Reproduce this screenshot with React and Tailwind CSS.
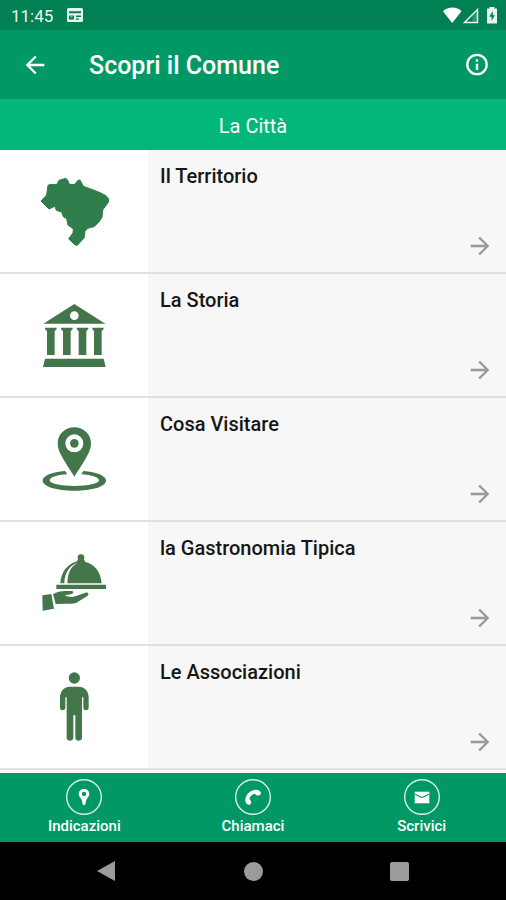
import { MdArrowBack, MdArrowForward } from 'react-icons/md';

function BrazilIcon() {
  return (
    <svg viewBox="42 33 240 240" className="h-20 w-20 text-[#2f7d4b]" fill="currentColor" aria-hidden="true">
      <path
        d="M84 76 L92 73 L110 74 L117 61 L137 55 L143 60 L148 73 L163 74 L174 61 L180 60 L190 79 L218 89 L238 97 L258 107 L266 117 L265 127 L248 150 L246 172 L236 187 L222 200 L203 205 L195 214 L192 234 L172 256 L164 254 L146 236 L159 219 L160 207 L144 195 L140 176 L130 170 L125 156 L109 151 L105 139 L87 147 L63 123 L80 105 Z"
        stroke="currentColor"
        strokeWidth="3"
        strokeLinejoin="round"
      />
    </svg>
  );
}

function MuseumIcon() {
  return (
    <svg viewBox="42 15 240 240" className="h-20 w-20 text-[#44764c]" fill="currentColor" aria-hidden="true">
      <path fillRule="evenodd" d="M163 42 L256 101 H70 Z M163 64 a13 13 0 1 0 0 26 a13 13 0 1 0 0 -26 Z" />
      <path d="M75 113 H110 V117 L104 124 V195 H81 V124 L75 117 Z" />
      <path d="M123 113 H158 V117 L152 124 V195 H129 V124 L123 117 Z" />
      <path d="M170 113 H205 V117 L199 124 V195 H176 V124 L170 117 Z" />
      <path d="M217 113 H251 V117 L245 124 V195 H222 V124 L217 117 Z" />
      <path d="M75 206 H251 L257 231 H69 Z" />
    </svg>
  );
}

function PlaceIcon() {
  return (
    <svg viewBox="42 12 240 240" className="h-20 w-20 text-[#44764c]" fill="currentColor" aria-hidden="true">
      <path
        fillRule="evenodd"
        d="M163 37 C135 37 113 58 113 86 C113 102 121 117 131 134 C142 153 154 169 163 185 C172 169 184 153 195 134 C205 117 213 102 213 86 C213 58 191 37 163 37 Z M163 58 a27 27 0 1 1 0 54 a27 27 0 1 1 0 -54 Z"
      />
      <circle cx="163" cy="85" r="13" />
      <path d="M135 168 C96 171 68 182 68 197 C68 214 110 227 163 227 C216 227 258 214 258 197 C258 182 230 171 190 168 L184 178 C217 180 237 187 237 196 C237 206 204 213 163 213 C122 213 89 206 89 196 C89 187 109 180 142 178 Z" />
    </svg>
  );
}

function FoodIcon() {
  return (
    <svg viewBox="42 24 240 240" className="h-20 w-20 text-[#44764c]" fill="currentColor" aria-hidden="true">
      <circle cx="183" cy="68" r="10" />
      <path d="M173 74 H193 L195 80 C224 87 243 111 245 145 H142 C143 113 152 94 174 83 C151 89 134 110 133 145 H121 C123 111 142 87 171 79 Z" />
      <path d="M109 149 H258 V162 H109 Z" />
      <path d="M67 181 L94 177 L102 221 L68 227 Z" />
      <path d="M99 178 C111 170 122 168 135 168 H156 C161 169 161 175 156 177 L134 181 C143 186 157 187 166 184 L196 173 C205 171 208 177 203 182 L168 204 C160 207 150 206 140 206 L107 207 Z" />
    </svg>
  );
}

function PersonIcon() {
  return (
    <svg viewBox="42 36 240 240" className="h-20 w-20 text-[#44764c]" fill="currentColor" aria-hidden="true">
      <circle cx="163" cy="69" r="17" />
      <path d="M149 95 H177 C196 96 205 109 206 126 V158 C206 168 190 168 190 158 V127 H186 V249 C186 260 166 260 166 249 V181 H160 V249 C160 260 140 260 140 249 V127 H136 V158 C136 168 120 168 120 158 V126 C121 109 130 96 149 95 Z" />
    </svg>
  );
}

const sections = [
  { label: 'Il Territorio', icon: BrazilIcon },
  { label: 'La Storia', icon: MuseumIcon },
  { label: 'Cosa Visitare', icon: PlaceIcon },
  { label: 'la Gastronomia Tipica', icon: FoodIcon },
  { label: 'Le Associazioni', icon: PersonIcon },
];

function PinGlyph() {
  return (
    <svg viewBox="0 0 36 36" className="h-9 w-9" fill="none" aria-hidden="true">
      <circle cx="18" cy="18" r="17.3" stroke="#d6f0e4" strokeWidth="1.4" />
      <path
        fill="#fff"
        fillRule="evenodd"
        d="M18 10 C14.9 10 12.7 12 12.7 15 C12.7 17 14 18.3 15.2 20 C16.2 21.6 16.3 23.5 16.5 25 Q18 27.5 19.5 25 C19.7 23.5 19.8 21.6 20.8 20 C22 18.3 23.3 17 23.3 15 C23.3 12 21.1 10 18 10 Z M18 12.7 a2.2 2.2 0 1 1 0 4.4 a2.2 2.2 0 1 1 0 -4.4 Z"
      />
    </svg>
  );
}

function PhoneGlyph() {
  return (
    <svg viewBox="0 0 36 36" className="h-9 w-9" fill="none" aria-hidden="true">
      <circle cx="18" cy="18" r="17.3" stroke="#d6f0e4" strokeWidth="1.4" />
      <path
        fill="#fff"
        d="M10.3 21.5 C10.5 15.5 15.5 10.7 21.5 10.8 C23.5 10.9 25.6 12.3 26 14.2 C26.2 15.5 24 17 22.5 16.6 C21.2 16.3 20.8 15 19.6 14.9 C17.3 14.9 14.4 17.8 14.5 20 C14.6 21.1 16.1 21.6 16.3 22.9 C16.5 24.4 15 26 13.7 25.8 C11.7 25.4 10.4 23.5 10.3 21.5 Z"
      />
    </svg>
  );
}

function MailGlyph() {
  return (
    <svg viewBox="0 0 36 36" className="h-9 w-9" fill="none" aria-hidden="true">
      <circle cx="18" cy="18" r="17.3" stroke="#d6f0e4" strokeWidth="1.4" />
      <path fill="#fff" d="M10.7 12.7 H25.3 V24.3 H10.7 Z" />
      <path stroke="#009966" strokeWidth="1.1" d="M11 15.2 C14 16 15 18.2 18 18.2 C21 18.2 22 16 25 15.2" />
    </svg>
  );
}

const actions = [
  { label: 'Indicazioni', icon: PinGlyph },
  { label: 'Chiamaci', icon: PhoneGlyph },
  { label: 'Scrivici', icon: MailGlyph },
];

function StatusBar() {
  return (
    <div className="flex h-[30px] items-center justify-between bg-[#008053] pl-[11px] pr-2 text-[#e8f5ef]">
      <div className="flex items-center gap-[14px]">
        <span className="text-[17px] leading-6 pt-[2px]">11:45</span>
        <svg viewBox="0 0 16 14" className="h-[14px] w-4" fill="currentColor" aria-hidden="true">
          <path
            fillRule="evenodd"
            d="M1.5 0 H14.5 Q16 0 16 1.5 V12.5 Q16 14 14.5 14 H1.5 Q0 14 0 12.5 V1.5 Q0 0 1.5 0 Z M2 3.3 V5.3 H14 V3.3 Z M2 7.6 V11.6 H7 V7.6 Z M9 7.6 V9 H14 V7.6 Z M9 10.5 V11.8 H12 V10.5 Z"
          />
          <path d="M3.5 7.6 H5.5 V9.5 H3.5 Z" opacity=".5" />
        </svg>
      </div>
      <svg viewBox="0 0 56 18" className="h-[18px] w-14" fill="currentColor" aria-hidden="true">
        <path fill="#fff" d="M1 5.3 C6 .3 15 .3 19.5 5.3 L10.2 17 Z" />
        <path d="M35.5 3.5 V16.5 H22.5 Z" fill="none" stroke="currentColor" strokeWidth="1.5" />
        <path d="M30.5 16 V10 L35 6 V16 Z" opacity=".2" />
        <path
          fillRule="evenodd"
          d="M47.5 1 H52.5 V2.5 H55 V17.5 H45 V2.5 H47.5 Z M50.8 5 L47.3 10.8 H49.5 V15 L52.9 9.2 H50.8 Z"
        />
      </svg>
    </div>
  );
}

export default function App() {
  return (
    <div className="flex min-h-screen flex-col bg-[#f7f7f7] font-[Roboto,sans-serif]">
      <StatusBar />

      <header className="flex h-[69px] items-center bg-[#009966] pl-[21px] pr-4 text-white">
        <button type="button" aria-label="Indietro">
          <MdArrowBack size={28} />
        </button>
        <h1 className="flex-1 pl-10 pt-[2px] text-[25px] font-medium leading-8">Scopri il Comune</h1>
        <button type="button" aria-label="Informazioni">
          <svg viewBox="0 0 26 26" className="h-[26px] w-[26px]" fill="none" stroke="currentColor">
            <circle cx="13" cy="12.5" r="9.7" strokeWidth="2.3" />
            <path d="M13 11.7 V18 M13 7.3 V9.700" strokeWidth="2.4" />
          </svg>
        </button>
      </header>

      <h2 className="flex h-[51px] items-center justify-center bg-[#03b77b] pt-[2px] text-[20px] leading-6 text-white">
        La Città
      </h2>

      <main className="flex-1">
        <ul>
          {sections.map((it) => (
            <li key={it.label} className="border-b-2 border-[#e0e0e0]">
              <a href="#" className="flex h-[122px]">
                <span className="flex w-[148px] shrink-0 items-center justify-center bg-white">
                  <it.icon />
                </span>
                <span className="flex flex-1 flex-col justify-between pb-3 pl-3 pr-3 pt-[14px]">
                  <span className="text-[20px] font-medium leading-6 text-[#161616]">{it.label}</span>
                  <MdArrowForward size={28} className="self-end text-[#999999]" />
                </span>
              </a>
            </li>
          ))}
        </ul>
      </main>

      <nav className="grid h-[69px] grid-cols-3 bg-[#009966] pt-[6px] text-white">
        {actions.map((it) => (
          <a key={it.label} href="#" className="flex flex-col items-center">
            <it.icon />
            <span className="text-[15px] font-medium leading-[22px]">{it.label}</span>
          </a>
        ))}
      </nav>

      <div className="grid h-[58px] grid-cols-3 bg-black px-[34px] text-[#9b9b9b]">
        <button type="button" aria-label="Back" className="flex items-center justify-center">
          <svg viewBox="0 0 20 20" className="h-5 w-5" fill="currentColor">
            <path d="M0 10 L18 0 V20 Z" />
          </svg>
        </button>
        <button type="button" aria-label="Home" className="flex items-center justify-center">
          <span className="h-[19px] w-[19px] rounded-full bg-current" />
        </button>
        <button type="button" aria-label="Recents" className="flex items-center justify-center">
          <span className="h-[19px] w-[19px] rounded-xs bg-current" />
        </button>
      </div>
    </div>
  );
}
